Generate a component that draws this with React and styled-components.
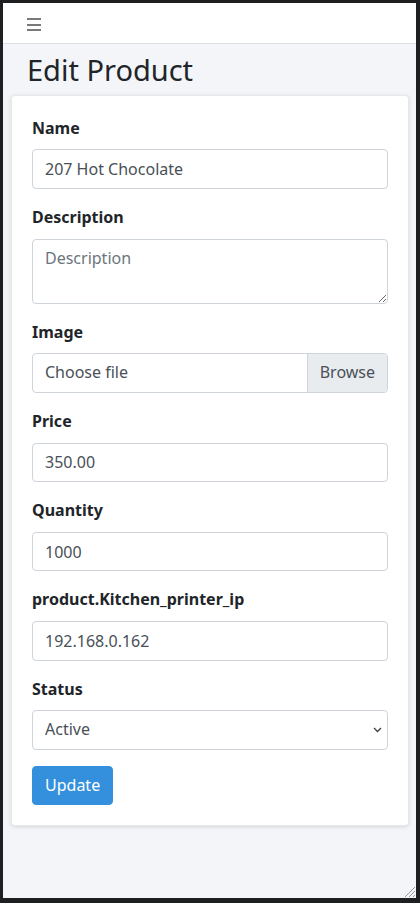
import React from "react";
import styled, { createGlobalStyle } from "styled-components";

const GlobalStyle = createGlobalStyle`
  * {
    box-sizing: border-box;
  }
  body {
    margin: 0;
    background: #1e1f21;
    font-family: "Noto Sans", "Open Sans", sans-serif;
    font-size: 16px;
    line-height: 1.6;
    color: #212529;
  }
`;

const Frame = styled.div`
  position: relative;
  width: 420px;
  height: 903px;
  border-style: solid;
  border-color: #1e1f21;
  border-width: 3px 4px 5px 3px;
  background: #f4f5f8;
  display: flex;
  flex-direction: column;
  overflow: hidden;
`;

const Navbar = styled.nav`
  height: 41px;
  flex-shrink: 0;
  background: #ffffff;
  border-bottom: 1px solid #dcdfe4;
  display: flex;
  align-items: center;
  padding-left: 24px;
`;

const Burger = styled.button`
  border: none;
  background: transparent;
  padding: 0;
  width: 14px;
  height: 13px;
  display: flex;
  flex-direction: column;
  justify-content: space-between;
  margin-top: 3px;

  span {
    display: block;
    height: 2px;
    background: #7a7a7a;
  }
`;

const Main = styled.main`
  padding: 9px 7px 0 8px;
`;

const Title = styled.h1`
  margin: 0 0 7px 16px;
  font-size: 29px;
  font-weight: 400;
  line-height: 1.2;
  color: #212529;
`;

const Card = styled.div`
  background: #ffffff;
  border: 1px solid rgba(0, 0, 0, 0.09);
  border-radius: 4px;
  box-shadow: 0 1px 4px rgba(0, 0, 0, 0.12);
  padding: 20px;
`;

const Group = styled.div`
  margin-bottom: 16px;
`;

const Label = styled.label`
  display: block;
  font-weight: 700;
  margin-bottom: 8px;
`;

const fieldBase = `
  display: block;
  width: 100%;
  height: 39.6px;
  padding: 6px 12px;
  font-family: "Noto Sans", "Open Sans", sans-serif;
  font-size: 16px;
  line-height: 1.6;
  color: #495057;
  background: #ffffff;
  border: 1px solid #ced4da;
  border-radius: 4px;
  outline: none;
`;

const Input = styled.input`
  ${fieldBase}
`;

const TextArea = styled.textarea`
  ${fieldBase}
  height: 65.2px;
  resize: vertical;

  &::placeholder {
    color: #6c757d;
  }
`;

const FileBox = styled.div`
  display: flex;
  height: 39.6px;
  border: 1px solid #ced4da;
  border-radius: 4px;
  overflow: hidden;
  color: #495057;
`;

const FileName = styled.span`
  flex: 1;
  padding: 6px 12px;
`;

const Browse = styled.span`
  padding: 6px 12px;
  background: #e9ecef;
  border-left: 1px solid #ced4da;
`;

const SelectWrap = styled.div`
  position: relative;
`;

const Select = styled.select`
  ${fieldBase}
  appearance: none;
  padding-right: 32px;
`;

const Chevron = styled.svg`
  position: absolute;
  right: 6px;
  top: 17px;
  pointer-events: none;
`;

const Button = styled.button`
  font-family: "Noto Sans", "Open Sans", sans-serif;
  font-size: 16px;
  line-height: 1.6;
  padding: 6px 12px;
  color: #ffffff;
  background: #3490dc;
  border: 1px solid #3490dc;
  border-radius: 4px;
`;

const Grip = styled.svg`
  position: absolute;
  right: 0;
  bottom: 0;
`;

const fields = [
  { label: "Price", value: "350.00" },
  { label: "Quantity", value: "1000" },
  { label: "product.Kitchen_printer_ip", value: "192.168.0.162" },
];

export default function App() {
  return (
    <>
      <GlobalStyle />
      <Frame>
        <Navbar>
          <Burger aria-label="menu">
            <span />
            <span />
            <span />
          </Burger>
        </Navbar>
        <Main>
          <Title>Edit Product</Title>
          <Card>
            <Group>
              <Label>Name</Label>
              <Input defaultValue="207 Hot Chocolate" />
            </Group>
            <Group>
              <Label>Description</Label>
              <TextArea rows={2} placeholder="Description" />
            </Group>
            <Group>
              <Label>Image</Label>
              <FileBox>
                <FileName>Choose file</FileName>
                <Browse>Browse</Browse>
              </FileBox>
            </Group>
            {fields.map((f) => (
              <Group key={f.label}>
                <Label>{f.label}</Label>
                <Input defaultValue={f.value} />
              </Group>
            ))}
            <Group>
              <Label>Status</Label>
              <SelectWrap>
                <Select defaultValue="active">
                  <option value="active">Active</option>
                  <option value="inactive">Inactive</option>
                </Select>
                <Chevron width="9" height="6" viewBox="0 0 9 6">
                  <path d="M1 1 L4.5 4.5 L8 1" fill="none" stroke="#3a3f45" strokeWidth="1.3" />
                </Chevron>
              </SelectWrap>
            </Group>
            <Button>Update</Button>
          </Card>
        </Main>
        <Grip width="14" height="14" viewBox="0 0 14 14">
          <path d="M13 3 L3 13 M13 7 L7 13 M13 11 L11 13" stroke="#9a9a9a" strokeWidth="1" />
        </Grip>
      </Frame>
    </>
  );
}
